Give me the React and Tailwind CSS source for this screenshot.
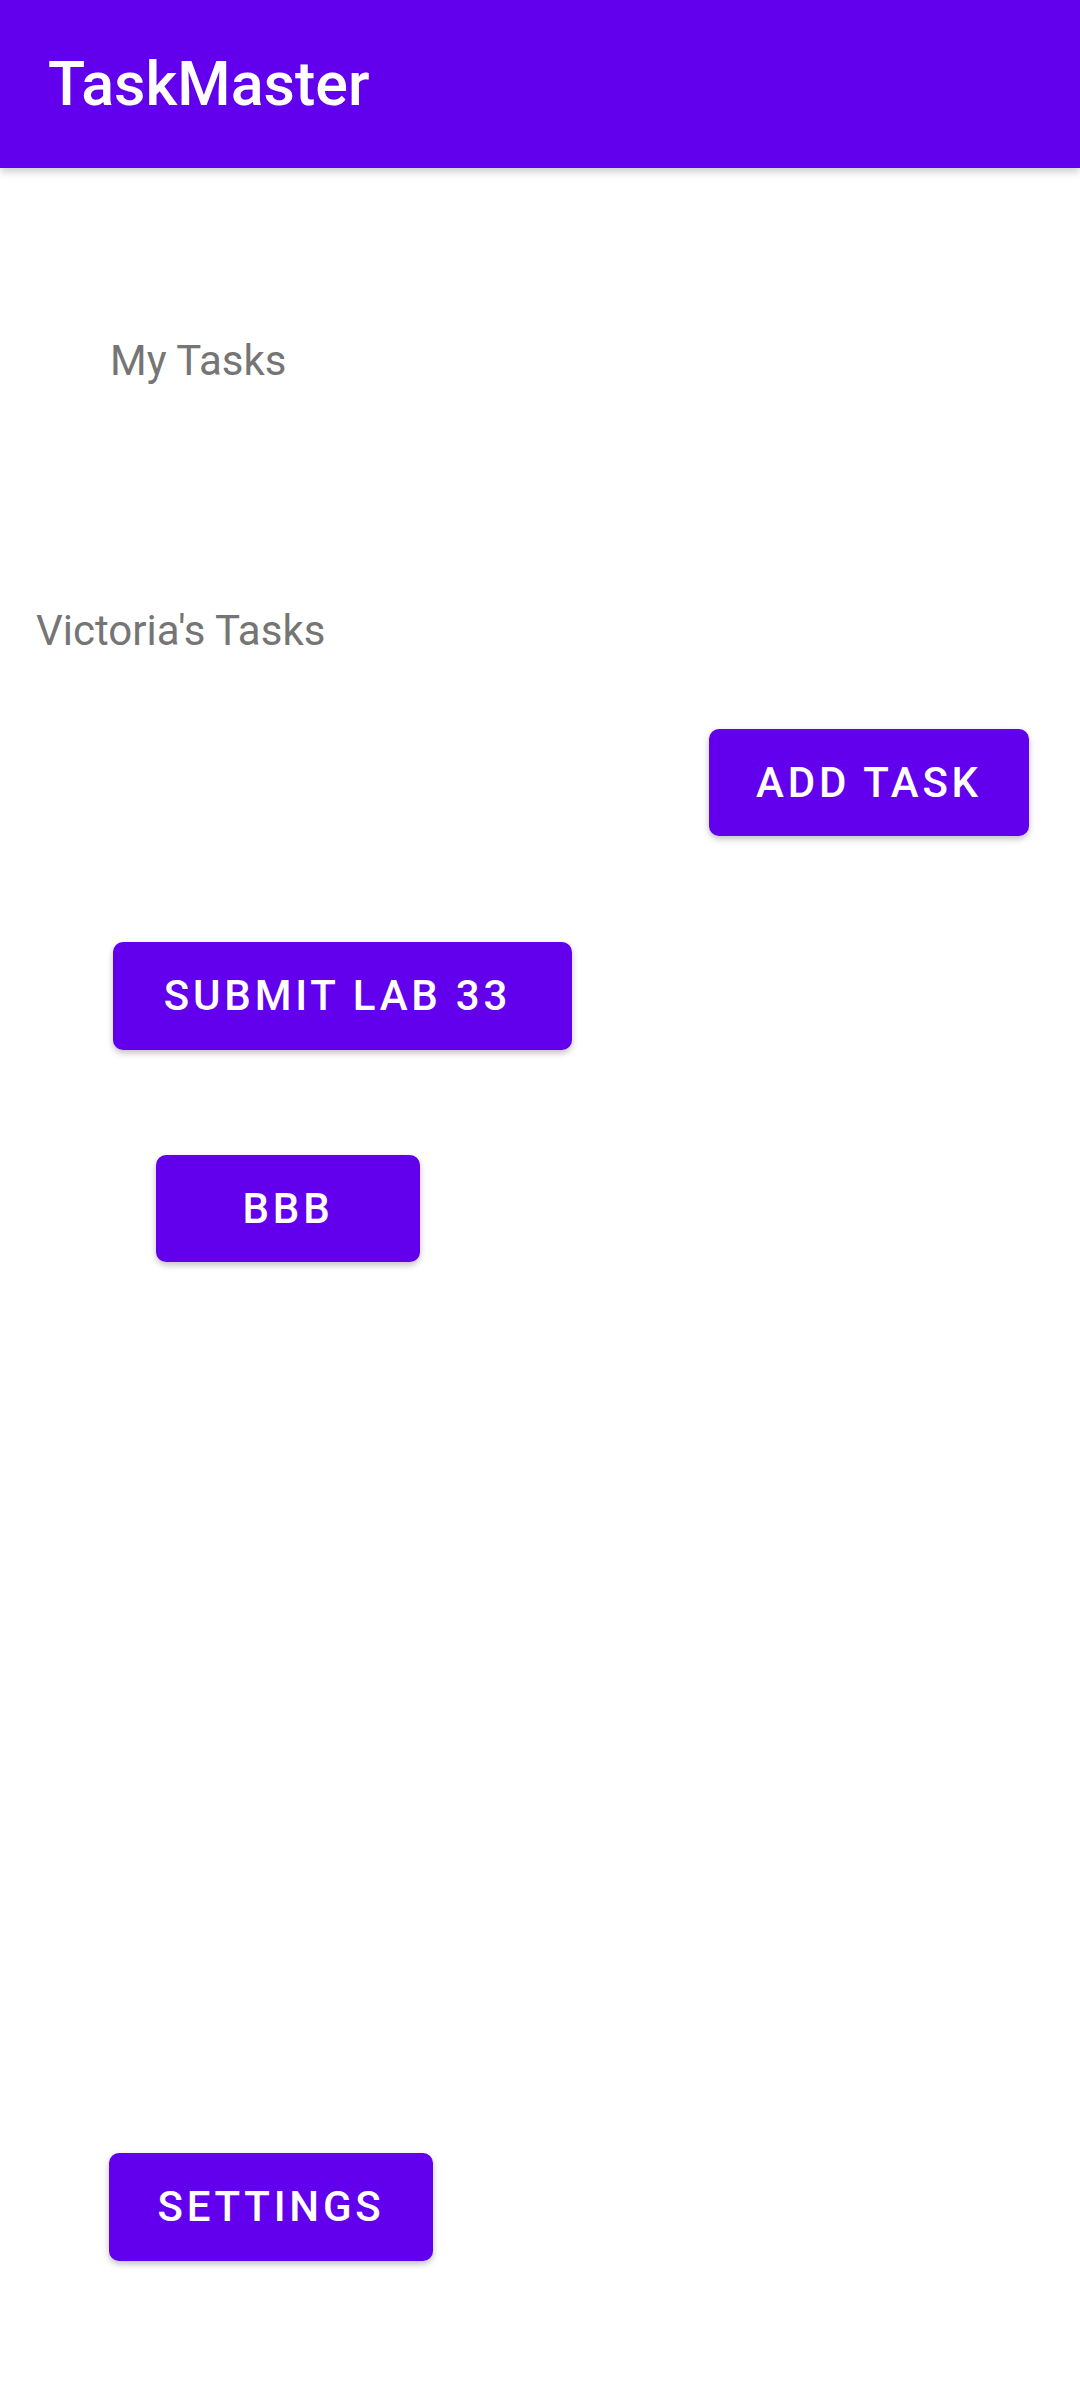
export default function App() {
  const btn = 'flex items-center justify-center bg-[#6200EE] text-white rounded-[10px] font-medium text-[42px] leading-none tracking-[0.09em] shadow-[0_3px_6px_rgba(0,0,0,0.25)]';
  return (
    <div className="min-h-[2400px] bg-white font-['Roboto',sans-serif] flex flex-col">
      {/* App bar */}
      <div className="h-[168px] bg-[#6200EE] flex items-center pl-[48px] shadow-[0_4px_8px_rgba(0,0,0,0.2)] shrink-0">
        <span className="text-white font-medium text-[61px] leading-none">TaskMaster</span>
      </div>

      <div className="mt-[172px] pl-[110px] text-[42px] leading-none text-[#757575]">My Tasks</div>
      <div className="mt-[228px] pl-[36px] text-[42px] leading-none text-[#757575]">Victoria's Tasks</div>

      <button className={`${btn} self-end mr-[51px] mt-[77px] w-[320px] h-[107px]`}>ADD TASK</button>
      <button className={`${btn} self-start ml-[113px] mt-[106px] w-[459px] h-[108px] pr-[10px]`}>SUBMIT LAB 33</button>
      <button className={`${btn} self-start ml-[156px] mt-[105px] w-[264px] h-[107px]`}>BBB</button>
      <button className={`${btn} self-start ml-[109px] mt-[891px] w-[324px] h-[108px]`}>SETTINGS</button>
    </div>
  );
}
